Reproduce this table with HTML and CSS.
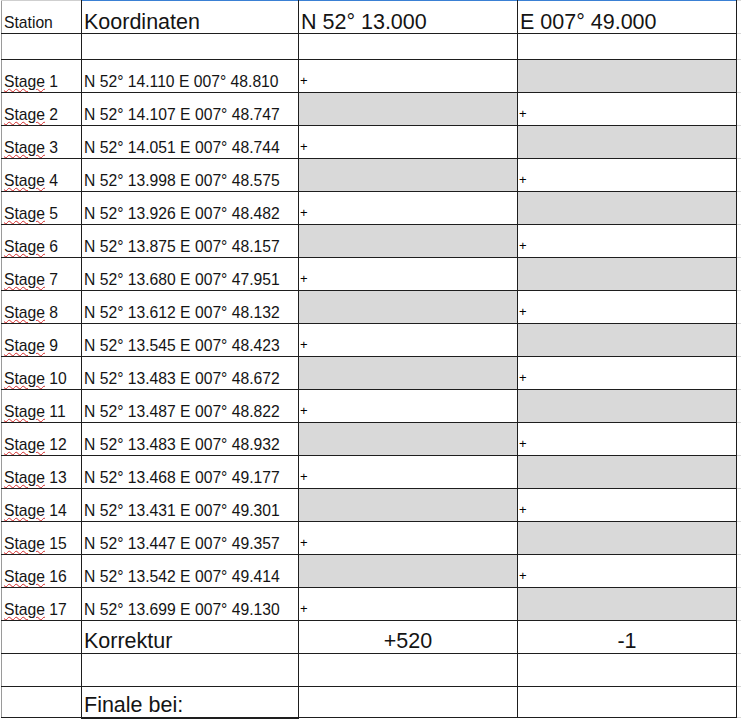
FILE: index.html
```html
<!DOCTYPE html>
<html lang="de">
<head>
<meta charset="utf-8">
<title>Stages</title>
<link rel="stylesheet" href="styles.css">
</head>
<body>
<table class="sheet">
  <colgroup>
    <col class="c1"><col class="c2"><col class="c3"><col class="c4"><col class="c5">
  </colgroup>
  <tr class="r-head">
    <td class="first sm top-grey">Station</td>
    <td class="lg top-blue">Koordinaten</td>
    <td class="lg top-blue">N 52° 13.000</td>
    <td class="lg top-blue">E 007° 49.000</td>
    <td class="ext"></td>
  </tr>
  <tr class="r-blank">
    <td class="first"></td><td></td><td></td><td></td><td class="ext"></td>
  </tr>
  <tr class="r"><td class="first sm"><span class="sp">Stage</span> 1</td><td class="sm">N 52° 14.110 E 007° 48.810</td><td class="pl">+</td><td class="gr"></td><td class="ext"></td></tr>
  <tr class="r"><td class="first sm"><span class="sp">Stage</span> 2</td><td class="sm">N 52° 14.107 E 007° 48.747</td><td class="gr"></td><td class="pl">+</td><td class="ext"></td></tr>
  <tr class="r"><td class="first sm"><span class="sp">Stage</span> 3</td><td class="sm">N 52° 14.051 E 007° 48.744</td><td class="pl">+</td><td class="gr"></td><td class="ext"></td></tr>
  <tr class="r"><td class="first sm"><span class="sp">Stage</span> 4</td><td class="sm">N 52° 13.998 E 007° 48.575</td><td class="gr"></td><td class="pl">+</td><td class="ext"></td></tr>
  <tr class="r"><td class="first sm"><span class="sp">Stage</span> 5</td><td class="sm">N 52° 13.926 E 007° 48.482</td><td class="pl">+</td><td class="gr"></td><td class="ext"></td></tr>
  <tr class="r"><td class="first sm"><span class="sp">Stage</span> 6</td><td class="sm">N 52° 13.875 E 007° 48.157</td><td class="gr"></td><td class="pl">+</td><td class="ext"></td></tr>
  <tr class="r"><td class="first sm"><span class="sp">Stage</span> 7</td><td class="sm">N 52° 13.680 E 007° 47.951</td><td class="pl">+</td><td class="gr"></td><td class="ext"></td></tr>
  <tr class="r"><td class="first sm"><span class="sp">Stage</span> 8</td><td class="sm">N 52° 13.612 E 007° 48.132</td><td class="gr"></td><td class="pl">+</td><td class="ext"></td></tr>
  <tr class="r"><td class="first sm"><span class="sp">Stage</span> 9</td><td class="sm">N 52° 13.545 E 007° 48.423</td><td class="pl">+</td><td class="gr"></td><td class="ext"></td></tr>
  <tr class="r"><td class="first sm"><span class="sp">Stage</span> 10</td><td class="sm">N 52° 13.483 E 007° 48.672</td><td class="gr"></td><td class="pl">+</td><td class="ext"></td></tr>
  <tr class="r"><td class="first sm"><span class="sp">Stage</span> 11</td><td class="sm">N 52° 13.487 E 007° 48.822</td><td class="pl">+</td><td class="gr"></td><td class="ext"></td></tr>
  <tr class="r"><td class="first sm"><span class="sp">Stage</span> 12</td><td class="sm">N 52° 13.483 E 007° 48.932</td><td class="gr"></td><td class="pl">+</td><td class="ext"></td></tr>
  <tr class="r"><td class="first sm"><span class="sp">Stage</span> 13</td><td class="sm">N 52° 13.468 E 007° 49.177</td><td class="pl">+</td><td class="gr"></td><td class="ext"></td></tr>
  <tr class="r"><td class="first sm"><span class="sp">Stage</span> 14</td><td class="sm">N 52° 13.431 E 007° 49.301</td><td class="gr"></td><td class="pl">+</td><td class="ext"></td></tr>
  <tr class="r"><td class="first sm"><span class="sp">Stage</span> 15</td><td class="sm">N 52° 13.447 E 007° 49.357</td><td class="pl">+</td><td class="gr"></td><td class="ext"></td></tr>
  <tr class="r"><td class="first sm"><span class="sp">Stage</span> 16</td><td class="sm">N 52° 13.542 E 007° 49.414</td><td class="gr"></td><td class="pl">+</td><td class="ext"></td></tr>
  <tr class="r"><td class="first sm"><span class="sp">Stage</span> 17</td><td class="sm">N 52° 13.699 E 007° 49.130</td><td class="pl">+</td><td class="gr"></td><td class="ext"></td></tr>
  <tr class="r">
    <td class="first"></td>
    <td class="lg mid">Korrektur</td>
    <td class="lg mid ctr">+520</td>
    <td class="lg mid ctr">-1</td>
    <td class="ext"></td>
  </tr>
  <tr class="r">
    <td class="first"></td><td></td><td></td><td></td><td class="ext"></td>
  </tr>
  <tr class="r-last">
    <td class="first"></td>
    <td class="lg thick">Finale bei:</td>
    <td></td>
    <td></td>
    <td class="ext"></td>
  </tr>
</table>
</body>
</html>
```

FILE: styles.css
```css
html, body {
  margin: 0;
  padding: 0;
  background: #ffffff;
}

body {
  font-family: "Liberation Sans", Arial, sans-serif;
  color: #141414;
  overflow: hidden;
}

.sheet {
  border-collapse: collapse;
  table-layout: fixed;
  margin-left: 1px;
  width: 740px;
}

.c1 { width: 80px; }
.c2 { width: 217px; }
.c3 { width: 219px; }
.c4 { width: 219px; }
.c5 { width: 5px; }

.sheet td {
  border: 1px solid #1e1e1e;
  padding: 0 2px 1px 2px;
  vertical-align: bottom;
  white-space: nowrap;
  overflow: hidden;
  line-height: 1.15;
}

.sheet td.first {
  border-left: 1px solid #9a9a9a;
}

.sheet td.top-grey {
  border-top: 1px solid #cfcfcf;
}

.sheet td.top-blue {
  border-top: 1px solid #3a80d4;
}

.sheet td.ext {
  border-top: 1px solid #d6d6d6;
  border-bottom: 1px solid #d6d6d6;
  border-right: 1px solid #d6d6d6;
  padding: 0;
}

.r-head { height: 33px; }
.r-blank { height: 26px; }
.r { height: 33px; }
.r-last { height: 31px; }

.sm {
  font-size: 15.7px;
}

.sheet td.lg {
  font-size: 21.5px;
  line-height: 1;
  padding-bottom: 0;
}

.sheet td.mid {
  padding-bottom: 1px;
}

.ctr {
  text-align: center;
}

.sheet td.pl {
  font-size: 13px;
  line-height: 1;
  padding-bottom: 5px;
  padding-left: 1px;
  color: #000000;
}

.gr {
  background: #d9d9d9;
}

.sp {
  text-decoration: underline wavy #d42a2a;
  text-decoration-thickness: 1.2px;
  text-underline-offset: 1px;
}

.sheet td.thick {
  border-bottom: 2px solid #1e1e1e;
}
```
